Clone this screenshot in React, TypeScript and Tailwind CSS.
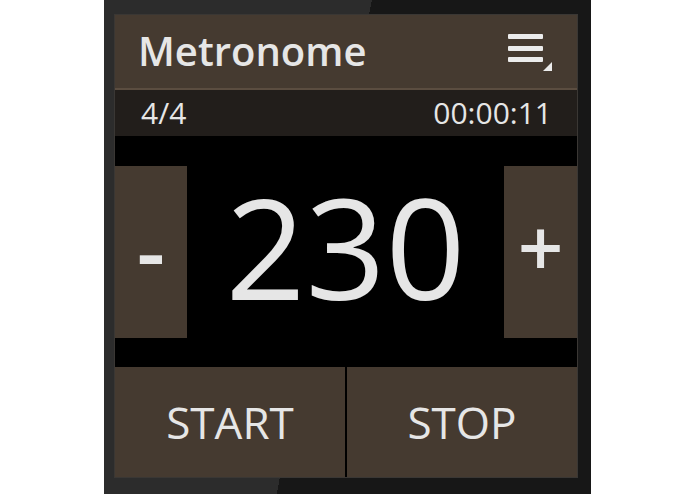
import { useState } from 'react';

const brown = 'bg-[#453a30]';

const MenuIcon = () => (
  <svg width="44" height="37" viewBox="0 0 44 37" fill="#ececec">
    <rect x="0" y="0" width="35" height="5" rx="1" />
    <rect x="0" y="12" width="35" height="5" rx="1" />
    <rect x="0" y="23" width="35" height="5" rx="1" />
    <polygon points="44,28 44,37 35,37" />
  </svg>
);

export default function App() {
  const [bpm, setBpm] = useState(230);

  return (
    <div className="min-h-screen bg-white flex justify-center font-['Open_Sans','Noto_Sans',sans-serif] text-[#e6e6e6]">
      <div className="w-[487px] h-[494px] pt-[15px] pl-[11px] pr-[14px] pb-[17px] bg-[linear-gradient(100.9deg,#2c2c2c_263px,#171717_263px)]">
        <div className="h-full flex flex-col ring-1 ring-[#3a3734]">
          {/* title bar */}
          <div className={`h-[75px] ${brown} border-b-2 border-[#5b4d40] flex items-center justify-between pl-[23px] pr-[25px]`}>
            <h1 className="text-[40px] font-semibold leading-none pb-[1px]">Metronome</h1>
            <button aria-label="menu" className="mt-[2px]">
              <MenuIcon />
            </button>
          </div>

          {/* status */}
          <div className="h-[46px] bg-[#221e1b] flex items-center justify-between pl-[26px] pr-[25px] text-[30px] leading-none">
            <span>4/4</span>
            <span>00:00:11</span>
          </div>

          {/* tempo */}
          <div className="h-[231px] bg-black flex items-center">
            <button
              onClick={() => setBpm(b => b - 1)}
              className={`w-[72px] h-[172px] ${brown} text-[88px] font-semibold leading-none flex items-center justify-center pb-[4px]`}
            >
              -
            </button>
            <div className="flex-1 text-center text-[140px] leading-none pb-[12px]">{bpm}</div>
            <button
              onClick={() => setBpm(b => b + 1)}
              className={`w-[73px] h-[172px] ${brown} text-[80px] font-semibold leading-none flex items-center justify-center pb-[12px]`}
            >
              +
            </button>
          </div>

          {/* controls */}
          <div className="h-[110px] flex gap-[2px] bg-black">
            <button className={`flex-1 ${brown} text-[44px] leading-none`}>START</button>
            <button className={`flex-1 ${brown} text-[44px] leading-none`}>STOP</button>
          </div>
        </div>
      </div>
    </div>
  );
}
